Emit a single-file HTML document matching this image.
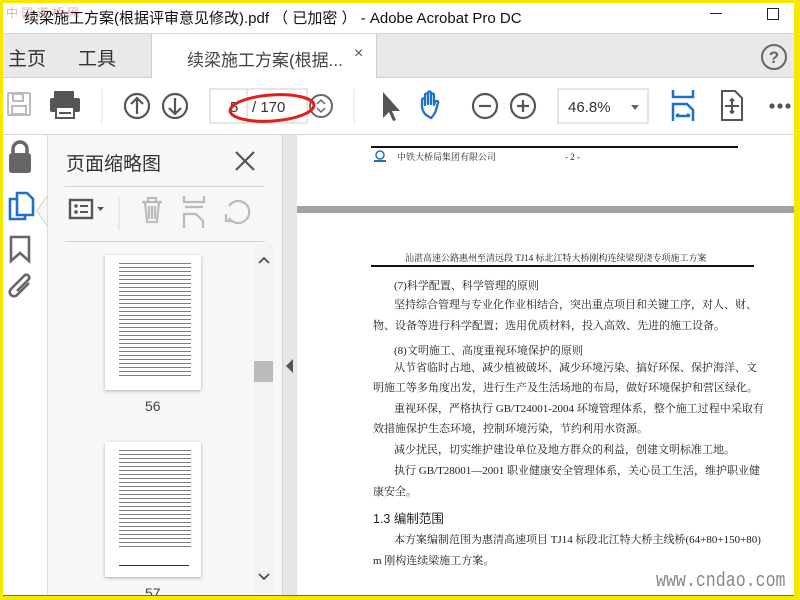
<!DOCTYPE html>
<html><head><meta charset="utf-8"><style>
*{margin:0;padding:0;box-sizing:border-box}
body{width:800px;height:600px;overflow:hidden;background:#f6e900;position:relative;font-family:"Liberation Sans","Noto Sans CJK SC",sans-serif}
.a{position:absolute}
.doc{font-family:"Liberation Serif","Noto Serif CJK SC",serif;font-size:11px;color:#222;white-space:nowrap;line-height:14px}
.j{text-align:justify;text-align-last:justify}
</style></head><body>
<div class="a" style="left:3px;top:3px;width:791px;height:592px;background:#fff"></div>
<div class="a" style="left:3px;top:595px;width:791px;height:1px;background:#2a9a3a"></div>
<!-- title bar -->
<div class="a" style="left:24px;top:7px;font-size:15px;color:#111">续梁施工方案(根据评审意见修改).pdf （ 已加密 ） - Adobe Acrobat Pro DC</div>
<div class="a" style="left:6px;top:4px;font-size:12px;color:#b33;opacity:.4">中 国 道 桥 网</div>
<div class="a" style="left:710px;top:13px;width:12px;height:1px;background:#222"></div>
<div class="a" style="left:767px;top:8px;width:12px;height:12px;border:1px solid #222"></div>
<!-- tab bar -->
<div class="a" style="left:3px;top:33px;width:791px;height:45px;background:#e9e9e9;border-top:1px solid #d6d6d6;border-bottom:1px solid #d0d0d0"></div>
<div class="a" style="left:8px;top:44px;font-size:19px;color:#333">主页</div>
<div class="a" style="left:78px;top:44px;font-size:19px;color:#333">工具</div>
<div class="a" style="left:151px;top:34px;width:226px;height:44px;background:#fff;border-left:1px solid #d0d0d0;border-right:1px solid #d0d0d0"></div>
<div class="a" style="left:187px;top:46px;font-size:17px;color:#444">续梁施工方案(根据...</div>
<div class="a" style="left:354px;top:45px;font-size:16px;color:#555">×</div>
<svg class="a" style="left:760px;top:43px" width="28" height="28"><circle cx="14" cy="14" r="12" fill="none" stroke="#666" stroke-width="2"/><text x="14" y="20" text-anchor="middle" font-size="17" font-family="Liberation Sans" fill="#666" font-weight="bold">?</text></svg>
<!-- toolbar -->
<div class="a" style="left:3px;top:134px;width:791px;height:1px;background:#d6d6d6"></div>
<svg class="a" style="left:0;top:85px" width="800" height="42">
<g fill="none" stroke="#bbb" stroke-width="2"><rect x="8" y="8" width="22" height="22" rx="1"/><rect x="13" y="9" width="10" height="7"/><rect x="12" y="21" width="14" height="8"/></g>
<g fill="#555"><rect x="54" y="6" width="20" height="8"/><rect x="50" y="13" width="30" height="14" rx="2"/><rect x="56" y="22" width="18" height="11" fill="#fff" stroke="#555" stroke-width="2"/><rect x="59" y="27" width="12" height="2"/></g>
<line x1="102" y1="4" x2="102" y2="38" stroke="#ddd"/>
<g fill="none" stroke="#555" stroke-width="2.2"><circle cx="137" cy="21" r="12"/><path d="M137 29V13M131 19l6-6 6 6"/><circle cx="175" cy="21" r="12"/><path d="M175 13v16M169 23l6 6 6-6"/></g>
<rect x="210" y="4" width="37" height="34" fill="#fff" stroke="#ccc"/>
<text x="230" y="27" font-size="15" fill="#333" font-family="Liberation Sans">5</text>
<rect x="247" y="4" width="60" height="34" fill="#fff" stroke="#ccc"/>
<text x="252" y="27" font-size="15" fill="#333" font-family="Liberation Sans">/ 170</text>
<circle cx="321" cy="21" r="11" fill="none" stroke="#666" stroke-width="2"/><path d="M317 19l4-4 4 4M317 23l4 4 4-4" fill="none" stroke="#666" stroke-width="1.5"/>
<ellipse cx="272" cy="23" rx="42" ry="13" fill="none" stroke="#e0201a" stroke-width="3" transform="rotate(-4 272 23)"/>
<line x1="354" y1="4" x2="354" y2="38" stroke="#ddd"/>
<path d="M383 7v26l6-6 4 9 3-1-4-9h8z" fill="#555"/>
<path d="M426 30c-3-3-4-6-4-9v-6c0-2 3-2 3 0v5V10c0-2 3-2 3 0v9V8c0-2 3-2 3 0v11V10c0-2 3-2 3 0v10l1-3c1-2 4-1 3 1l-2 7c-1 4-3 6-5 8z" fill="none" stroke="#1f70c8" stroke-width="2.3" stroke-linejoin="round"/>
<g fill="none" stroke="#555" stroke-width="2.2"><circle cx="485" cy="21" r="12"/><path d="M479 21h12"/><circle cx="523" cy="21" r="12"/><path d="M517 21h12M523 15v12"/></g>
<rect x="558" y="4" width="90" height="34" fill="#fff" stroke="#ccc"/>
<text x="568" y="27" font-size="15" fill="#333" font-family="Liberation Sans">46.8%</text>
<path d="M631 20h8l-4 5z" fill="#666"/>
<g fill="none" stroke="#1f70c8" stroke-width="2.5"><path d="M673 5v7h20V5"/><path d="M673 36V19h14l6 6v11"/><path d="M676 31h14M676 31l3-2M690 31l-3-2"/></g>
<g fill="none" stroke="#555" stroke-width="2"><path d="M722 6h13l7 7v22h-20z"/><path d="M732 14v14M725 21h14M730 16l2-2 2 2M730 26l2 2 2-2"/></g>
<g fill="#555"><circle cx="772" cy="21" r="2.6"/><circle cx="780" cy="21" r="2.6"/><circle cx="788" cy="21" r="2.6"/></g>
</svg>
<!-- left column -->
<div class="a" style="left:47px;top:135px;width:236px;height:460px;background:#f7f7f7;border-left:1px solid #ddd"></div>
<svg class="a" style="left:3px;top:135px" width="44" height="180">
<path d="M10 18v-4a7 7 0 0 1 14 0v4" fill="none" stroke="#666" stroke-width="3.5"/><rect x="6" y="18" width="22" height="20" rx="3" fill="#666"/>
<g fill="none" stroke="#1f70c8" stroke-width="2.6"><path d="M14 64h-7v20h15v-4"/><path d="M14 58h10l6 6v16H14z"/></g>
<path d="M8 102h18v24l-9-8-9 8z" fill="none" stroke="#666" stroke-width="2.6"/>
<path d="M26 148l-12 12a4 4 0 0 1-6-6l14-14a3 3 0 0 1 4 4l-12 12" fill="none" stroke="#666" stroke-width="2.6"/>
</svg>
<svg class="a" style="left:36px;top:196px" width="12" height="30"><path d="M11 0L1 15 11 30" fill="#f7f7f7" stroke="#ccc"/></svg>
<div class="a" style="left:66px;top:149px;font-size:19px;color:#333">页面缩略图</div>
<svg class="a" style="left:233px;top:149px" width="24" height="24"><path d="M3 3l18 18M21 3L3 21" stroke="#555" stroke-width="2.2"/></svg>
<div class="a" style="left:65px;top:186px;width:200px;height:1px;background:#d4d4d4"></div>
<div class="a" style="left:65px;top:241px;width:200px;height:1px;background:#d4d4d4"></div>
<svg class="a" style="left:65px;top:190px" width="200" height="48">
<rect x="5" y="10" width="22" height="18" fill="none" stroke="#555" stroke-width="2.4"/><g fill="#555"><circle cx="11" cy="16" r="1.8"/><circle cx="11" cy="22" r="1.8"/><rect x="15" y="15" width="8" height="2"/><rect x="15" y="21" width="8" height="2"/><path d="M32 17h7l-3.5 4z"/></g>
<line x1="54" y1="6" x2="54" y2="40" stroke="#ddd"/>
<g fill="none" stroke="#bbb" stroke-width="2.2"><path d="M77 12h20M83 12V8h8v4M80 12l2 20h10l2-20M84 16v13M87 16v13M90 16v13"/><path d="M119 6v6h20V6M119 38V24h12l7 7v7M120 17h18"/><path d="M164 28a11 11 0 1 0 0-12M161 24v7h7"/></g>
</svg>
<!-- thumbnails -->
<div class="a" style="left:105px;top:255px;width:96px;height:135px;background:#fff;box-shadow:0 1px 3px #aaa"></div>
<div class="a" style="left:119px;top:262px;width:72px;height:116px;background:repeating-linear-gradient(#fff 0 1px,#555 1px 2px,#fff 2px 4px);opacity:.75"></div>
<div class="a" style="left:145px;top:398px;font-size:14px;color:#444">56</div>
<div class="a" style="left:105px;top:442px;width:96px;height:135px;background:#fff;box-shadow:0 1px 3px #aaa"></div>
<div class="a" style="left:119px;top:449px;width:72px;height:100px;background:repeating-linear-gradient(#fff 0 1px,#555 1px 2px,#fff 2px 4px);opacity:.75"></div>
<div class="a" style="left:119px;top:565px;width:70px;height:1px;background:#333"></div>
<div class="a" style="left:145px;top:585px;font-size:14px;color:#444;height:10px;overflow:hidden">57</div>
<div class="a" style="left:254px;top:244px;width:20px;height:350px;background:#f3f3f3"></div>
<svg class="a" style="left:254px;top:248px" width="20" height="345"><path d="M5 15l5-5 5 5M5 326l5 5 5-5" fill="none" stroke="#444" stroke-width="1.6"/></svg>
<div class="a" style="left:254px;top:361px;width:19px;height:21px;background:#bbb"></div>
<div class="a" style="left:282px;top:135px;width:15px;height:460px;background:#e6e6e6;border-left:1px solid #d4d4d4"></div>
<svg class="a" style="left:285px;top:358px" width="10" height="16"><path d="M8 1L1 8l7 7z" fill="#555"/></svg>
<!-- document -->
<div class="a" style="left:297px;top:135px;width:497px;height:460px;background:#fff"></div>
<div class="a" style="left:371px;top:146px;width:367px;height:2px;background:#111"></div>
<svg class="a" style="left:372px;top:150px" width="16" height="14"><circle cx="8" cy="5" r="4" fill="none" stroke="#2a6fb0" stroke-width="1.5"/><rect x="2" y="10" width="12" height="2" fill="#2a6fb0"/></svg>
<div class="a doc" style="left:397px;top:150px;font-size:9px">中铁大桥局集团有限公司</div>
<div class="a doc" style="left:565px;top:150px;font-size:9px">- 2 -</div>
<div class="a" style="left:297px;top:206px;width:497px;height:7px;background:#a2a2a2"></div>
<div class="a doc" style="left:405px;top:251px;font-size:9px">汕湛高速公路惠州至清远段 TJ14 标北江特大桥刚构连续梁现浇专项施工方案</div>
<div class="a" style="left:371px;top:265px;width:383px;height:2px;background:#111"></div>
<div class="a doc" style="left:394px;top:279px">(7)科学配置、科学管理的原则</div>
<div class="a doc j" style="left:394px;top:298px;width:358px">坚持综合管理与专业化作业相结合，突出重点项目和关键工序，对人、财、</div>
<div class="a doc" style="left:373px;top:319px">物、设备等进行科学配置；选用优质材料，投入高效、先进的施工设备。</div>
<div class="a doc" style="left:394px;top:344px">(8)文明施工、高度重视环境保护的原则</div>
<div class="a doc j" style="left:394px;top:361px;width:358px">从节省临时占地、减少植被破坏、减少环境污染、搞好环保、保护海洋、文</div>
<div class="a doc" style="left:373px;top:381px">明施工等多角度出发，进行生产及生活场地的布局，做好环境保护和营区绿化。</div>
<div class="a doc j" style="left:394px;top:402px;width:358px">重视环保，严格执行 GB/T24001-2004 环境管理体系，整个施工过程中采取有</div>
<div class="a doc" style="left:373px;top:422px">效措施保护生态环境，控制环境污染，节约利用水资源。</div>
<div class="a doc" style="left:394px;top:443px">减少扰民，切实维护建设单位及地方群众的利益，创建文明标准工地。</div>
<div class="a doc j" style="left:394px;top:464px;width:358px">执行 GB/T28001—2001 职业健康安全管理体系，关心员工生活，维护职业健</div>
<div class="a doc" style="left:373px;top:485px">康安全。</div>
<div class="a doc" style="left:373px;top:512px;font-size:12.5px;font-family:'Liberation Sans','Noto Sans CJK SC',sans-serif">1.3 编制范围</div>
<div class="a doc j" style="left:394px;top:533px;width:358px">本方案编制范围为惠清高速项目 TJ14 标段北江特大桥主线桥(64+80+150+80)</div>
<div class="a doc" style="left:373px;top:554px">m 刚构连续梁施工方案。</div>
<div class="a" style="left:656px;top:570px;font-size:20px;color:#888;font-family:'Liberation Mono',monospace;transform:scaleX(.83);transform-origin:left">www.cndao.com</div>
<div class="a" style="left:794px;top:0;width:6px;height:600px;background:#f6e900"></div>
<div class="a" style="left:0;top:596px;width:800px;height:4px;background:#f6e900"></div>
</body></html>
